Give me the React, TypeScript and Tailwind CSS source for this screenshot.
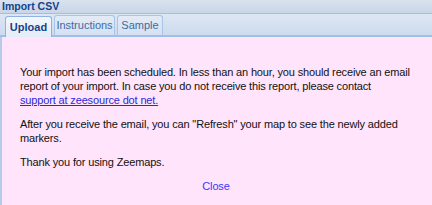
export default function App() {
  return (
    <div className="w-[432px] h-[205px] overflow-hidden flex flex-col bg-[#ffe4fb] font-['Liberation_Sans',Arial,sans-serif]">
      {/* Title bar */}
      <div className="h-[14px] shrink-0 flex items-center px-[2px] bg-gradient-to-b from-[#d9e2ee] to-[#c9d6e8] border-b border-[#a5bde0]">
        <span className="text-[10.5px] leading-none font-bold text-[#15428b]">Import CSV</span>
      </div>

      {/* Tab strip */}
      <div className="h-[23px] shrink-0 flex items-end gap-[2px] pl-[5px] bg-gradient-to-b from-[#dde7f4] to-[#cddbee] border-b-2 border-[#9fbfe8]">
        <div className="h-[21px] w-[47px] -mb-[2px] flex items-center justify-center rounded-t-[3px] border border-b-0 border-[#8db2e3] bg-gradient-to-b from-[#f3f7fc] to-[#e4ecf7]">
          <span className="text-[11px] font-bold text-[#15428b]">Upload</span>
        </div>
        <div className="h-[20px] w-[61px] flex items-center justify-center rounded-t-[3px] border border-b-0 border-[#a9c4e8] bg-gradient-to-b from-[#e3ebf6] to-[#d4e1f2]">
          <span className="text-[11px] text-[#416aa3]">Instructions</span>
        </div>
        <div className="h-[20px] w-[46px] flex items-center justify-center rounded-t-[3px] border border-b-0 border-[#a9c4e8] bg-gradient-to-b from-[#e3ebf6] to-[#d4e1f2]">
          <span className="text-[11px] text-[#416aa3]">Sample</span>
        </div>
      </div>

      {/* Body */}
      <div className="flex-1 border-l-2 border-[#b5cbe9] pl-[18px] pt-[28px] text-[11px] leading-[14px] tracking-[-0.15px] text-[#111]">
        <div className="w-[405px] whitespace-nowrap">
          <p>
            Your import has been scheduled. In less than an hour, you should receive an email<br />
            report of your import. In case you do not receive this report, please contact<br />
            <a href="#" className="text-[#2a2ad8] underline">support at zeesource dot net.</a>
          </p>
          <p className="mt-[10px]">
            After you receive the email, you can "Refresh" your map to see the newly added<br />
            markers.
          </p>
          <p className="mt-[10px]">Thank you for using Zeemaps.</p>
        </div>
        <div className="mt-[10px] w-[392px] text-center">
          <a href="#" className="text-[#3838ff]">Close</a>
        </div>
      </div>
    </div>
  )
}
